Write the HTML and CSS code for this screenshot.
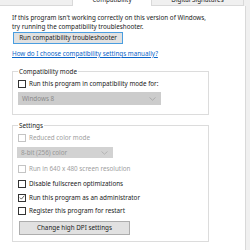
FILE: index.html
```html
<!DOCTYPE html>
<html>
<head>
<meta charset="utf-8">
<link rel="stylesheet" href="styles.css">
</head>
<body>
<div class="window">
  <div class="tabs">
    <div class="tab prev"></div>
    <div class="tab active"><span>Compatibility</span></div>
    <div class="tab next"><span>Digital Signatures</span></div>
  </div>
  <div class="panel">
    <p class="intro">If this program isn't working correctly on this version of Windows,<br>try running the compatibility troubleshooter.</p>
    <div class="btn focused trouble">Run compatibility troubleshooter</div>
    <a class="link">How do I choose compatibility settings manually?</a>

    <fieldset class="group compat">
      <legend>Compatibility mode</legend>
      <div class="row r-compat"><span class="cb"></span><span>Run this program in compatibility mode for:</span></div>
      <div class="select big"><span>Windows 8</span><svg class="chev" width="7" height="4" viewBox="0 0 7 4"><path d="M0.5 0.5 L3.5 3.2 L6.5 0.5" fill="none" stroke="#a8a8a8" stroke-width="0.9"/></svg></div>
    </fieldset>

    <fieldset class="group settings">
      <legend>Settings</legend>
      <div class="row disabled r1"><span class="cb"></span><span>Reduced color mode</span></div>
      <div class="select small"><span>8-bit (256) color</span><svg class="chev" width="7" height="4" viewBox="0 0 7 4"><path d="M0.5 0.5 L3.5 3.2 L6.5 0.5" fill="none" stroke="#b0b0b0" stroke-width="0.9"/></svg></div>
      <div class="row disabled r3"><span class="cb"></span><span>Run in 640 x 480 screen resolution</span></div>
      <div class="row r4"><span class="cb"></span><span>Disable fullscreen optimizations</span></div>
      <div class="row r5"><span class="cb"><svg width="7" height="7" viewBox="0 0 7 7"><path d="M1 3.6 L2.8 5.4 L6.2 1.4" fill="none" stroke="#333" stroke-width="0.9"/></svg></span><span>Run this program as an administrator</span></div>
      <div class="row r6"><span class="cb"></span><span>Register this program for restart</span></div>
      <div class="btn dpi">Change high DPI settings</div>
    </fieldset>
  </div>
</div>
</body>
</html>
```
FILE: styles.css
```css
html, body {
  margin: 0;
  padding: 0;
  background: #f0f0f0;
}
body {
  font-family: "Noto Sans", "Open Sans", sans-serif;
  font-size: 6.3px;
  line-height: 9px;
  color: #222;
  width: 250px;
  height: 250px;
  overflow: hidden;
  white-space: nowrap;
}
.window {
  width: 246px;
}
.tabs {
  display: flex;
  height: 6px;
}
.tab {
  box-sizing: border-box;
  height: 6px;
  overflow: hidden;
  text-align: center;
}
.tab span {
  display: block;
  line-height: 9px;
  margin-top: -5px;
}
.tab.prev {
  width: 72px;
  background: #f0f0f0;
  border-bottom: 1px solid #d9d9d9;
}
.tab.active {
  width: 80px;
  background: #fff;
  border-left: 1px solid #d9d9d9;
  border-right: 1px solid #d9d9d9;
}
.tab.next {
  width: 92px;
  background: #f0f0f0;
  border-bottom: 1px solid #d9d9d9;
  border-right: 1px solid #d9d9d9;
}
.panel {
  background: #fff;
  border-right: 1px solid #d9d9d9;
  height: 244px;
  box-sizing: border-box;
  padding: 7px 0 0 12px;
}
.intro {
  margin: 0;
}
.btn {
  box-sizing: border-box;
  background: #e1e1e1;
  border: 1px solid #adadad;
  text-align: center;
  color: #222;
}
.btn.trouble {
  width: 110px;
  height: 12px;
  line-height: 10px;
  margin: 1px 0 0 1px;
}
.btn.focused {
  border-color: #4a9ee0;
}
.link {
  display: block;
  margin-top: 5px;
  color: #0a64c8;
  text-decoration: underline;
  text-decoration-thickness: 0.5px;
  text-underline-offset: 1px;
  width: max-content;
}
.group {
  margin: 0;
  width: 197px;
  box-sizing: border-box;
  border: 1px solid #dcdcdc;
  padding: 0 5px;
}
.group legend {
  padding: 0 1px;
  line-height: 9px;
}
.group.compat {
  margin-top: 9px;
  padding-bottom: 9px;
}
.group.settings {
  margin-top: 6px;
  padding-bottom: 6px;
}
.row {
  display: flex;
  align-items: center;
  gap: 3px;
  height: 13px;
}
.cb {
  box-sizing: border-box;
  width: 8px;
  height: 8px;
  border: 1px solid #333;
  background: #fff;
  display: flex;
  align-items: center;
  justify-content: center;
}
.cb svg {
  display: block;
}
.disabled {
  color: #a0a0a0;
}
.disabled .cb {
  border-color: #c4c4c4;
}
.r-compat { margin-top: 1px; }
.select {
  box-sizing: border-box;
  background: #cccccc;
  color: #8a8a8a;
  display: flex;
  align-items: center;
  justify-content: space-between;
  padding: 0 5px 0 4px;
}
.select.big {
  width: 143px;
  height: 13px;
  margin-top: 2px;
}
.select.small {
  width: 96px;
  height: 11px;
  margin-top: 3px;
  margin-left: -1px;
  background: #d2d2d2;
  color: #979797;
}
.r1 { margin-top: 1px; }
.r3 { margin-top: 4px; }
.r4 { margin-top: 2px; }
.r5 { margin-top: 1px; }
.r6 { margin-top: 0; }
.btn.dpi {
  width: 111px;
  height: 14px;
  line-height: 12px;
  margin: 4px 0 0 1px;
}
```
